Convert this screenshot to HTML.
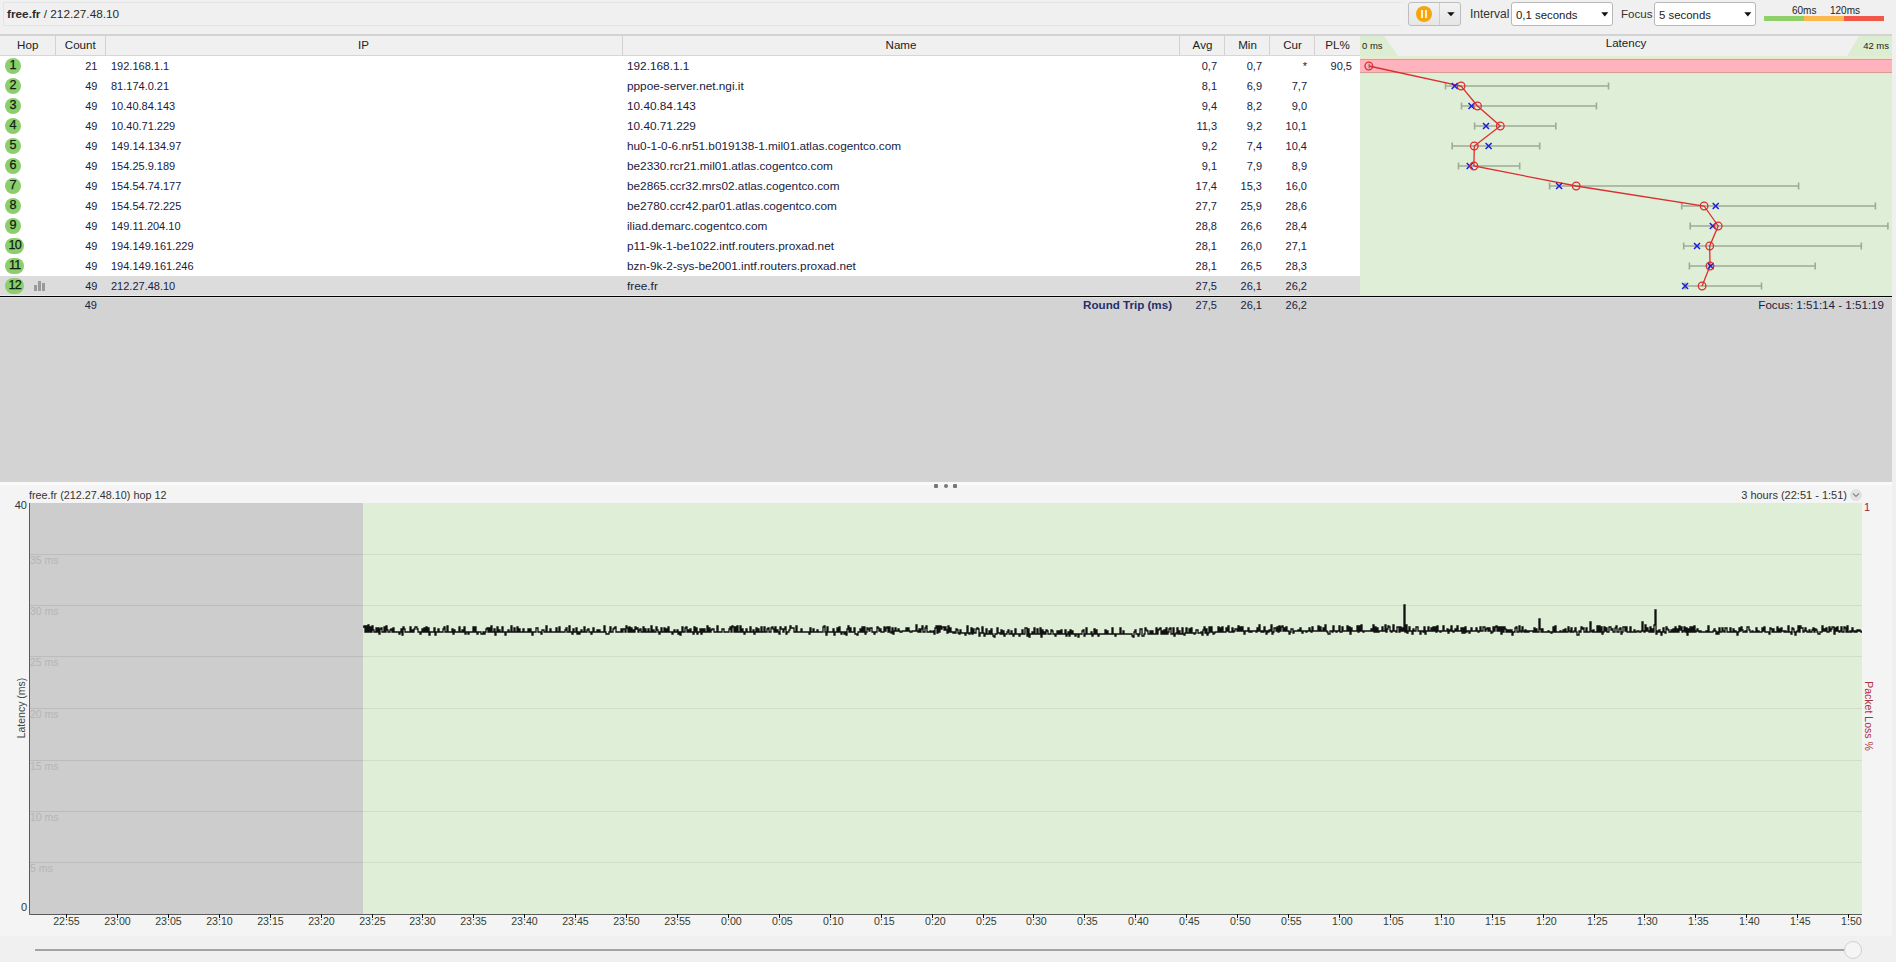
<!DOCTYPE html><html><head><meta charset="utf-8"><style>
*{margin:0;padding:0;box-sizing:border-box}
html,body{width:1896px;height:962px;overflow:hidden;background:#f0f0f0;font-family:"Liberation Sans", sans-serif;position:relative}
.a{position:absolute}
.t{position:absolute;white-space:nowrap;line-height:20px;font-size:11.6px;color:#18223e}
.n{font-size:11px}
.r{text-align:right}
.hd{position:absolute;white-space:nowrap;line-height:20px;font-size:11.6px;color:#222;text-align:center}

</style></head><body>
<div class="a" style="left:3px;top:2px;width:1399px;height:24px;border:1px solid #e4e4e4;border-right-color:#f4f4f4;background:#f0f0f0"></div>
<div class="t" style="left:7px;top:4px;color:#2b2b2b;font-size:11.8px"><b>free.fr</b> / 212.27.48.10</div>
<div class="a" style="left:1408px;top:2px;width:53px;height:24px;border:1px solid #bdbdbd;border-radius:3px;background:linear-gradient(#f2f2f2,#e6e6e6)"></div>
<div class="a" style="left:1439px;top:3px;width:1px;height:22px;background:#cfcfcf"></div>
<div class="a" style="left:1416px;top:6px;width:16px;height:16px;border-radius:50%;background:#f6a60c"></div>
<div class="a" style="left:1421px;top:10px;width:2px;height:8px;background:#fff2c4"></div>
<div class="a" style="left:1425px;top:10px;width:2px;height:8px;background:#fff2c4"></div>
<svg class="a" style="left:1446.5px;top:12px" width="9" height="5"><path d="M0.2 0.2 L7.6 0.2 L3.9 4.2Z" fill="#111"/></svg>
<div class="t" style="left:1470px;top:4px;color:#333;font-size:12px">Interval</div>
<div class="a" style="left:1511px;top:2px;width:102px;height:24px;border:1px solid #b8b8b8;border-radius:3px;background:#fff"></div>
<div class="t" style="left:1516px;top:5px;color:#222;font-size:11.4px">0,1 seconds</div>
<svg class="a" style="left:1601px;top:12px" width="8" height="5"><path d="M0.3 0.2 L7.3 0.2 L3.8 4.5Z" fill="#111"/></svg>
<div class="t" style="left:1621px;top:4px;color:#333;font-size:11.6px">Focus</div>
<div class="a" style="left:1654px;top:2px;width:102px;height:24px;border:1px solid #b8b8b8;border-radius:3px;background:#fff"></div>
<div class="t" style="left:1659px;top:5px;color:#222;font-size:11.4px">5 seconds</div>
<svg class="a" style="left:1744px;top:12px" width="8" height="5"><path d="M0.3 0.2 L7.3 0.2 L3.8 4.5Z" fill="#111"/></svg>
<div class="a" style="left:1764px;top:16px;width:40px;height:5px;background:#8fcf6a"></div>
<div class="a" style="left:1804px;top:16px;width:40px;height:5px;background:#fbb84e"></div>
<div class="a" style="left:1844px;top:16px;width:40px;height:5px;background:#f2584a"></div>
<div class="t" style="left:1792px;top:1px;color:#222;font-size:10px">60ms</div>
<div class="t" style="left:1830px;top:1px;color:#222;font-size:10px">120ms</div>
<div class="a" style="left:0;top:34px;width:1892px;height:22px;background:#f0f0f0;border-top:2px solid #d3d3d3;border-bottom:1px solid #d6d6d6"></div>
<div class="hd" style="left:0px;top:35px;width:55.5px">Hop</div>
<div class="hd" style="left:55.5px;top:35px;width:49.5px">Count</div>
<div class="a" style="left:55px;top:36px;width:1px;height:19px;background:#d2d2d2"></div>
<div class="hd" style="left:105px;top:35px;width:517px">IP</div>
<div class="a" style="left:105px;top:36px;width:1px;height:19px;background:#d2d2d2"></div>
<div class="hd" style="left:622px;top:35px;width:558px">Name</div>
<div class="a" style="left:622px;top:36px;width:1px;height:19px;background:#d2d2d2"></div>
<div class="hd" style="left:1180px;top:35px;width:45px">Avg</div>
<div class="a" style="left:1179px;top:36px;width:1px;height:19px;background:#d2d2d2"></div>
<div class="hd" style="left:1225px;top:35px;width:45px">Min</div>
<div class="a" style="left:1224px;top:36px;width:1px;height:19px;background:#d2d2d2"></div>
<div class="hd" style="left:1270px;top:35px;width:45px">Cur</div>
<div class="a" style="left:1269px;top:36px;width:1px;height:19px;background:#d2d2d2"></div>
<div class="hd" style="left:1315px;top:35px;width:45px">PL%</div>
<div class="a" style="left:1314px;top:36px;width:1px;height:19px;background:#d2d2d2"></div>
<svg class="a" style="left:1360px;top:36px" width="532" height="20"><rect width="532" height="20" fill="#f0f0f0"/><path d="M0 0 L24 0 L38 20 L0 20Z" fill="#dcedd2"/><path d="M532 0 L499 0 L487 20 L532 20Z" fill="#dcedd2"/></svg>
<div class="t" style="left:1362px;top:36px;color:#222;font-size:9.5px">0 ms</div>
<div class="t r" style="left:1800px;width:89px;top:36px;color:#222;font-size:9.5px">42 ms</div>
<div class="hd" style="left:1360px;top:33px;width:532px">Latency</div>
<div class="a" style="left:0;top:56px;width:1360px;height:240px;background:#fff"></div>
<div class="a" style="left:0;top:276px;width:1360px;height:20px;background:#dcdcdc"></div>
<div class="a" style="left:5.199999999999999px;top:58px;width:15.5px;height:16px;border-radius:8px;background:#8bcf6c"></div>
<div class="t" style="left:5.199999999999999px;width:15.5px;top:54.5px;text-align:center;color:#102010;font-size:12.6px;letter-spacing:0;-webkit-text-stroke:0.25px #102010">1</div>
<div class="t r n" style="left:55.5px;width:42px;top:56px">21</div>
<div class="t n" style="left:111px;top:56px">192.168.1.1</div>
<div class="t" style="left:627px;top:56px;font-size:11.8px">192.168.1.1</div>
<div class="t r n" style="left:1165px;width:52px;top:56px">0,7</div>
<div class="t r n" style="left:1210px;width:52px;top:56px">0,7</div>
<div class="t r n" style="left:1255px;width:52px;top:56px">*</div>
<div class="t r n" style="left:1300px;width:52px;top:56px">90,5</div>
<div class="a" style="left:5.199999999999999px;top:78px;width:15.5px;height:16px;border-radius:8px;background:#8bcf6c"></div>
<div class="t" style="left:5.199999999999999px;width:15.5px;top:74.5px;text-align:center;color:#102010;font-size:12.6px;letter-spacing:0;-webkit-text-stroke:0.25px #102010">2</div>
<div class="t r n" style="left:55.5px;width:42px;top:76px">49</div>
<div class="t n" style="left:111px;top:76px">81.174.0.21</div>
<div class="t" style="left:627px;top:76px;font-size:11.8px">pppoe-server.net.ngi.it</div>
<div class="t r n" style="left:1165px;width:52px;top:76px">8,1</div>
<div class="t r n" style="left:1210px;width:52px;top:76px">6,9</div>
<div class="t r n" style="left:1255px;width:52px;top:76px">7,7</div>
<div class="t r n" style="left:1300px;width:52px;top:76px"></div>
<div class="a" style="left:5.199999999999999px;top:98px;width:15.5px;height:16px;border-radius:8px;background:#8bcf6c"></div>
<div class="t" style="left:5.199999999999999px;width:15.5px;top:94.5px;text-align:center;color:#102010;font-size:12.6px;letter-spacing:0;-webkit-text-stroke:0.25px #102010">3</div>
<div class="t r n" style="left:55.5px;width:42px;top:96px">49</div>
<div class="t n" style="left:111px;top:96px">10.40.84.143</div>
<div class="t" style="left:627px;top:96px;font-size:11.8px">10.40.84.143</div>
<div class="t r n" style="left:1165px;width:52px;top:96px">9,4</div>
<div class="t r n" style="left:1210px;width:52px;top:96px">8,2</div>
<div class="t r n" style="left:1255px;width:52px;top:96px">9,0</div>
<div class="t r n" style="left:1300px;width:52px;top:96px"></div>
<div class="a" style="left:5.199999999999999px;top:118px;width:15.5px;height:16px;border-radius:8px;background:#8bcf6c"></div>
<div class="t" style="left:5.199999999999999px;width:15.5px;top:114.5px;text-align:center;color:#102010;font-size:12.6px;letter-spacing:0;-webkit-text-stroke:0.25px #102010">4</div>
<div class="t r n" style="left:55.5px;width:42px;top:116px">49</div>
<div class="t n" style="left:111px;top:116px">10.40.71.229</div>
<div class="t" style="left:627px;top:116px;font-size:11.8px">10.40.71.229</div>
<div class="t r n" style="left:1165px;width:52px;top:116px">11,3</div>
<div class="t r n" style="left:1210px;width:52px;top:116px">9,2</div>
<div class="t r n" style="left:1255px;width:52px;top:116px">10,1</div>
<div class="t r n" style="left:1300px;width:52px;top:116px"></div>
<div class="a" style="left:5.199999999999999px;top:138px;width:15.5px;height:16px;border-radius:8px;background:#8bcf6c"></div>
<div class="t" style="left:5.199999999999999px;width:15.5px;top:134.5px;text-align:center;color:#102010;font-size:12.6px;letter-spacing:0;-webkit-text-stroke:0.25px #102010">5</div>
<div class="t r n" style="left:55.5px;width:42px;top:136px">49</div>
<div class="t n" style="left:111px;top:136px">149.14.134.97</div>
<div class="t" style="left:627px;top:136px;font-size:11.8px">hu0-1-0-6.nr51.b019138-1.mil01.atlas.cogentco.com</div>
<div class="t r n" style="left:1165px;width:52px;top:136px">9,2</div>
<div class="t r n" style="left:1210px;width:52px;top:136px">7,4</div>
<div class="t r n" style="left:1255px;width:52px;top:136px">10,4</div>
<div class="t r n" style="left:1300px;width:52px;top:136px"></div>
<div class="a" style="left:5.199999999999999px;top:158px;width:15.5px;height:16px;border-radius:8px;background:#8bcf6c"></div>
<div class="t" style="left:5.199999999999999px;width:15.5px;top:154.5px;text-align:center;color:#102010;font-size:12.6px;letter-spacing:0;-webkit-text-stroke:0.25px #102010">6</div>
<div class="t r n" style="left:55.5px;width:42px;top:156px">49</div>
<div class="t n" style="left:111px;top:156px">154.25.9.189</div>
<div class="t" style="left:627px;top:156px;font-size:11.8px">be2330.rcr21.mil01.atlas.cogentco.com</div>
<div class="t r n" style="left:1165px;width:52px;top:156px">9,1</div>
<div class="t r n" style="left:1210px;width:52px;top:156px">7,9</div>
<div class="t r n" style="left:1255px;width:52px;top:156px">8,9</div>
<div class="t r n" style="left:1300px;width:52px;top:156px"></div>
<div class="a" style="left:5.199999999999999px;top:178px;width:15.5px;height:16px;border-radius:8px;background:#8bcf6c"></div>
<div class="t" style="left:5.199999999999999px;width:15.5px;top:174.5px;text-align:center;color:#102010;font-size:12.6px;letter-spacing:0;-webkit-text-stroke:0.25px #102010">7</div>
<div class="t r n" style="left:55.5px;width:42px;top:176px">49</div>
<div class="t n" style="left:111px;top:176px">154.54.74.177</div>
<div class="t" style="left:627px;top:176px;font-size:11.8px">be2865.ccr32.mrs02.atlas.cogentco.com</div>
<div class="t r n" style="left:1165px;width:52px;top:176px">17,4</div>
<div class="t r n" style="left:1210px;width:52px;top:176px">15,3</div>
<div class="t r n" style="left:1255px;width:52px;top:176px">16,0</div>
<div class="t r n" style="left:1300px;width:52px;top:176px"></div>
<div class="a" style="left:5.199999999999999px;top:198px;width:15.5px;height:16px;border-radius:8px;background:#8bcf6c"></div>
<div class="t" style="left:5.199999999999999px;width:15.5px;top:194.5px;text-align:center;color:#102010;font-size:12.6px;letter-spacing:0;-webkit-text-stroke:0.25px #102010">8</div>
<div class="t r n" style="left:55.5px;width:42px;top:196px">49</div>
<div class="t n" style="left:111px;top:196px">154.54.72.225</div>
<div class="t" style="left:627px;top:196px;font-size:11.8px">be2780.ccr42.par01.atlas.cogentco.com</div>
<div class="t r n" style="left:1165px;width:52px;top:196px">27,7</div>
<div class="t r n" style="left:1210px;width:52px;top:196px">25,9</div>
<div class="t r n" style="left:1255px;width:52px;top:196px">28,6</div>
<div class="t r n" style="left:1300px;width:52px;top:196px"></div>
<div class="a" style="left:5.199999999999999px;top:218px;width:15.5px;height:16px;border-radius:8px;background:#8bcf6c"></div>
<div class="t" style="left:5.199999999999999px;width:15.5px;top:214.5px;text-align:center;color:#102010;font-size:12.6px;letter-spacing:0;-webkit-text-stroke:0.25px #102010">9</div>
<div class="t r n" style="left:55.5px;width:42px;top:216px">49</div>
<div class="t n" style="left:111px;top:216px">149.11.204.10</div>
<div class="t" style="left:627px;top:216px;font-size:11.8px">iliad.demarc.cogentco.com</div>
<div class="t r n" style="left:1165px;width:52px;top:216px">28,8</div>
<div class="t r n" style="left:1210px;width:52px;top:216px">26,6</div>
<div class="t r n" style="left:1255px;width:52px;top:216px">28,4</div>
<div class="t r n" style="left:1300px;width:52px;top:216px"></div>
<div class="a" style="left:5.15px;top:238px;width:18.8px;height:16px;border-radius:8px;background:#8bcf6c"></div>
<div class="t" style="left:5.45px;width:18.8px;top:234.5px;text-align:center;color:#102010;font-size:12.6px;letter-spacing:-0.6px;-webkit-text-stroke:0.25px #102010">10</div>
<div class="t r n" style="left:55.5px;width:42px;top:236px">49</div>
<div class="t n" style="left:111px;top:236px">194.149.161.229</div>
<div class="t" style="left:627px;top:236px;font-size:11.8px">p11-9k-1-be1022.intf.routers.proxad.net</div>
<div class="t r n" style="left:1165px;width:52px;top:236px">28,1</div>
<div class="t r n" style="left:1210px;width:52px;top:236px">26,0</div>
<div class="t r n" style="left:1255px;width:52px;top:236px">27,1</div>
<div class="t r n" style="left:1300px;width:52px;top:236px"></div>
<div class="a" style="left:5.15px;top:258px;width:18.8px;height:16px;border-radius:8px;background:#8bcf6c"></div>
<div class="t" style="left:5.45px;width:18.8px;top:254.5px;text-align:center;color:#102010;font-size:12.6px;letter-spacing:-0.6px;-webkit-text-stroke:0.25px #102010">11</div>
<div class="t r n" style="left:55.5px;width:42px;top:256px">49</div>
<div class="t n" style="left:111px;top:256px">194.149.161.246</div>
<div class="t" style="left:627px;top:256px;font-size:11.8px">bzn-9k-2-sys-be2001.intf.routers.proxad.net</div>
<div class="t r n" style="left:1165px;width:52px;top:256px">28,1</div>
<div class="t r n" style="left:1210px;width:52px;top:256px">26,5</div>
<div class="t r n" style="left:1255px;width:52px;top:256px">28,3</div>
<div class="t r n" style="left:1300px;width:52px;top:256px"></div>
<div class="a" style="left:5.15px;top:278px;width:18.8px;height:16px;border-radius:8px;background:#8bcf6c"></div>
<div class="t" style="left:5.45px;width:18.8px;top:274.5px;text-align:center;color:#102010;font-size:12.6px;letter-spacing:-0.6px;-webkit-text-stroke:0.25px #102010">12</div>
<div class="t r n" style="left:55.5px;width:42px;top:276px">49</div>
<div class="t n" style="left:111px;top:276px">212.27.48.10</div>
<div class="t" style="left:627px;top:276px;font-size:11.8px">free.fr</div>
<div class="t r n" style="left:1165px;width:52px;top:276px">27,5</div>
<div class="t r n" style="left:1210px;width:52px;top:276px">26,1</div>
<div class="t r n" style="left:1255px;width:52px;top:276px">26,2</div>
<div class="t r n" style="left:1300px;width:52px;top:276px"></div>
<div class="a" style="left:34px;top:285px;width:3px;height:6px;background:#9a9a9a"></div>
<div class="a" style="left:38px;top:281px;width:3px;height:10px;background:#9a9a9a"></div>
<div class="a" style="left:42px;top:283px;width:3px;height:8px;background:#9a9a9a"></div>
<svg class="a" style="left:1360px;top:56px" width="532" height="240"><rect width="532" height="240" fill="#dfeed6"/><rect x="0" y="3" width="532" height="14" fill="#ffb3bf"/><rect x="0" y="2" width="532" height="1" fill="#f3e3c8"/><rect x="0" y="3" width="532" height="1" fill="#d49f90"/><rect x="0" y="16" width="532" height="1" fill="#d49f90"/><rect x="0" y="17" width="532" height="1" fill="#f3e3c8"/><path d="M85.5 30 H248.5 M85.5 26.5 V33.5 M248.5 26.5 V33.5" stroke="#9eab98" stroke-width="1.6" fill="none"/><path d="M101.5 50 H236.4 M101.5 46.5 V53.5 M236.4 46.5 V53.5" stroke="#9eab98" stroke-width="1.6" fill="none"/><path d="M114.6 70 H195.8 M114.6 66.5 V73.5 M195.8 66.5 V73.5" stroke="#9eab98" stroke-width="1.6" fill="none"/><path d="M92.2 90 H179.7 M92.2 86.5 V93.5 M179.7 86.5 V93.5" stroke="#9eab98" stroke-width="1.6" fill="none"/><path d="M98.5 110 H159.7 M98.5 106.5 V113.5 M159.7 106.5 V113.5" stroke="#9eab98" stroke-width="1.6" fill="none"/><path d="M189.6 130 H438.6 M189.6 126.5 V133.5 M438.6 126.5 V133.5" stroke="#9eab98" stroke-width="1.6" fill="none"/><path d="M321.7 150 H515.4 M321.7 146.5 V153.5 M515.4 146.5 V153.5" stroke="#9eab98" stroke-width="1.6" fill="none"/><path d="M330.2 170 H527.9 M330.2 166.5 V173.5 M527.9 166.5 V173.5" stroke="#9eab98" stroke-width="1.6" fill="none"/><path d="M323.7 190 H501.3 M323.7 186.5 V193.5 M501.3 186.5 V193.5" stroke="#9eab98" stroke-width="1.6" fill="none"/><path d="M329.4 210 H455.2 M329.4 206.5 V213.5 M455.2 206.5 V213.5" stroke="#9eab98" stroke-width="1.6" fill="none"/><path d="M325.1 230 H401.5 M325.1 226.5 V233.5 M401.5 226.5 V233.5" stroke="#9eab98" stroke-width="1.6" fill="none"/><polyline points="8.8,10 101.1,30 117.5,50 140.3,70 114.3,90 113.9,110 216.2,130 344.1,150 358.2,170 349.7,190 350.0,210 342.1,230" stroke="#dc2e30" stroke-width="1.3" fill="none"/><circle cx="8.8" cy="10" r="3.8" stroke="#dc2e30" stroke-width="1.3" fill="none"/><path d="M91.7 27 L97.7 33 M91.7 33 L97.7 27" stroke="#1c1ce0" stroke-width="1.5"/><circle cx="101.1" cy="30" r="3.8" stroke="#dc2e30" stroke-width="1.3" fill="none"/><path d="M108.5 47 L114.5 53 M108.5 53 L114.5 47" stroke="#1c1ce0" stroke-width="1.5"/><circle cx="117.5" cy="50" r="3.8" stroke="#dc2e30" stroke-width="1.3" fill="none"/><path d="M123.0 67 L129.0 73 M123.0 73 L129.0 67" stroke="#1c1ce0" stroke-width="1.5"/><circle cx="140.3" cy="70" r="3.8" stroke="#dc2e30" stroke-width="1.3" fill="none"/><path d="M125.6 87 L131.6 93 M125.6 93 L131.6 87" stroke="#1c1ce0" stroke-width="1.5"/><circle cx="114.3" cy="90" r="3.8" stroke="#dc2e30" stroke-width="1.3" fill="none"/><path d="M106.7 107 L112.7 113 M106.7 113 L112.7 107" stroke="#1c1ce0" stroke-width="1.5"/><circle cx="113.9" cy="110" r="3.8" stroke="#dc2e30" stroke-width="1.3" fill="none"/><path d="M196.1 127 L202.1 133 M196.1 133 L202.1 127" stroke="#1c1ce0" stroke-width="1.5"/><circle cx="216.2" cy="130" r="3.8" stroke="#dc2e30" stroke-width="1.3" fill="none"/><path d="M352.7 147 L358.7 153 M352.7 153 L358.7 147" stroke="#1c1ce0" stroke-width="1.5"/><circle cx="344.1" cy="150" r="3.8" stroke="#dc2e30" stroke-width="1.3" fill="none"/><path d="M349.8 167 L355.8 173 M349.8 173 L355.8 167" stroke="#1c1ce0" stroke-width="1.5"/><circle cx="358.2" cy="170" r="3.8" stroke="#dc2e30" stroke-width="1.3" fill="none"/><path d="M334.0 187 L340.0 193 M334.0 193 L340.0 187" stroke="#1c1ce0" stroke-width="1.5"/><circle cx="349.7" cy="190" r="3.8" stroke="#dc2e30" stroke-width="1.3" fill="none"/><path d="M347.6 207 L353.6 213 M347.6 213 L353.6 207" stroke="#1c1ce0" stroke-width="1.5"/><circle cx="350.0" cy="210" r="3.8" stroke="#dc2e30" stroke-width="1.3" fill="none"/><path d="M322.1 227 L328.1 233 M322.1 233 L328.1 227" stroke="#1c1ce0" stroke-width="1.5"/><circle cx="342.1" cy="230" r="3.8" stroke="#dc2e30" stroke-width="1.3" fill="none"/><path d="M9.2 7.8 V12.2" stroke="#8a6a6a" stroke-width="1.2"/></svg>
<div class="a" style="left:0;top:296px;width:1892px;height:186px;background:#d3d3d3"></div>
<div class="a" style="left:0;top:295px;width:1360px;height:1px;background:#ebebeb"></div>
<div class="a" style="left:0;top:296px;width:1892px;height:1px;background:#000"></div>
<div class="a" style="left:0;top:297px;width:1892px;height:1px;background:#e3e3e3"></div>
<div class="t r n" style="left:55px;width:42px;top:295px">49</div>
<div class="t r" style="left:900px;width:272px;top:295px;font-weight:bold;color:#1f2f6a">Round Trip (ms)</div>
<div class="t r n" style="left:1165px;width:52px;top:295px">27,5</div>
<div class="t r n" style="left:1210px;width:52px;top:295px">26,1</div>
<div class="t r n" style="left:1255px;width:52px;top:295px">26,2</div>
<div class="t r" style="left:1600px;width:284px;top:295px">Focus: 1:51:14 - 1:51:19</div>
<div class="a" style="left:0;top:482px;width:1892px;height:454px;background:#f4f4f4"></div>
<div class="a" style="left:0;top:482px;width:1892px;height:3px;background:#fafafa"></div>
<div class="a" style="left:934px;top:484px;width:4px;height:4px;background:#777;border-radius:1px"></div>
<div class="a" style="left:943.5px;top:484px;width:4px;height:4px;background:#777;border-radius:50%"></div>
<div class="a" style="left:953px;top:484px;width:4px;height:4px;background:#777;border-radius:1px"></div>
<div class="t" style="left:29px;top:485px;color:#333;font-size:10.8px">free.fr (212.27.48.10) hop 12</div>
<div class="t r" style="left:1600px;width:247px;top:485px;color:#333;font-size:11px">3 hours (22:51 - 1:51)</div>
<div class="a" style="left:1850px;top:489px;width:12px;height:12px;border-radius:50%;background:#e2e2e2"></div>
<svg class="a" style="left:1852px;top:492px" width="8" height="6"><path d="M1 1.5 L4 4.5 L7 1.5" stroke="#888" stroke-width="1.2" fill="none"/></svg>
<svg class="a" style="left:0;top:482px" width="1896" height="454"><rect x="30" y="21" width="333" height="411" fill="#cdcdcd"/><rect x="363" y="21" width="1499" height="411" fill="#dfeed6"/><path d="M30 72.5 H363" stroke="#bcbcbc" stroke-width="1"/><path d="M363 72.5 H1862" stroke="#d0ddc8" stroke-width="1"/><path d="M30 123.5 H363" stroke="#bcbcbc" stroke-width="1"/><path d="M363 123.5 H1862" stroke="#d0ddc8" stroke-width="1"/><path d="M30 174.5 H363" stroke="#bcbcbc" stroke-width="1"/><path d="M363 174.5 H1862" stroke="#d0ddc8" stroke-width="1"/><path d="M30 226.5 H363" stroke="#bcbcbc" stroke-width="1"/><path d="M363 226.5 H1862" stroke="#d0ddc8" stroke-width="1"/><path d="M30 278.5 H363" stroke="#bcbcbc" stroke-width="1"/><path d="M363 278.5 H1862" stroke="#d0ddc8" stroke-width="1"/><path d="M30 329.5 H363" stroke="#bcbcbc" stroke-width="1"/><path d="M363 329.5 H1862" stroke="#d0ddc8" stroke-width="1"/><path d="M30 380.5 H363" stroke="#bcbcbc" stroke-width="1"/><path d="M363 380.5 H1862" stroke="#d0ddc8" stroke-width="1"/><path d="M363 145.0 H364 V144.0 H365 V150.0 H366 V144.0 H367 V150.0 H368 V143.0 H369 V150.0 H370 V145.0 H371 V150.0 H372 V144.0 H373 V148.0 H374 V150.0 H375 V150.0 H376 V146.0 H377 V150.0 H378 V146.0 H379 V152.0 H380 V147.0 H381 V146.0 H382 V150.0 H383 V150.0 H384 V145.0 H385 V150.0 H386 V144.0 H387 V148.0 H388 V150.0 H389 V150.0 H390 V148.0 H391 V147.0 H392 V150.0 H393 V146.0 H394 V150.0 H395 V150.0 H396 V150.0 H397 V150.0 H398 V150.0 H399 V152.0 H400 V150.0 H401 V147.0 H402 V153.0 H403 V145.0 H404 V147.0 H405 V150.0 H406 V150.0 H407 V150.0 H408 V150.0 H409 V150.0 H410 V145.0 H411 V150.0 H412 V148.0 H413 V150.0 H414 V147.0 H415 V145.0 H416 V145.0 H417 V147.0 H418 V150.0 H419 V150.0 H420 V152.0 H421 V150.0 H422 V147.0 H423 V150.0 H424 V146.0 H425 V150.0 H426 V145.0 H427 V150.0 H428 V146.0 H429 V153.0 H430 V150.0 H431 V150.0 H432 V150.0 H433 V150.0 H434 V146.0 H435 V153.0 H436 V150.0 H437 V150.0 H438 V147.0 H439 V150.0 H440 V150.0 H441 V150.0 H442 V150.0 H443 V147.0 H444 V145.0 H445 V150.0 H446 V150.0 H447 V144.0 H448 V150.0 H449 V150.0 H450 V150.0 H451 V150.0 H452 V147.0 H453 V152.0 H454 V148.0 H455 V150.0 H456 V150.0 H457 V150.0 H458 V150.0 H459 V145.0 H460 V150.0 H461 V150.0 H462 V148.0 H463 V150.0 H464 V145.0 H465 V152.0 H466 V150.0 H467 V150.0 H468 V152.0 H469 V150.0 H470 V150.0 H471 V150.0 H472 V150.0 H473 V145.0 H474 V150.0 H475 V145.0 H476 V150.0 H477 V152.0 H478 V150.0 H479 V150.0 H480 V150.0 H481 V152.0 H482 V152.0 H483 V150.0 H484 V152.0 H485 V150.0 H486 V147.0 H487 V146.0 H488 V150.0 H489 V146.0 H490 V150.0 H491 V144.0 H492 V150.0 H493 V150.0 H494 V147.0 H495 V153.0 H496 V150.0 H497 V145.0 H498 V150.0 H499 V148.0 H500 V150.0 H501 V150.0 H502 V145.0 H503 V150.0 H504 V150.0 H505 V153.0 H506 V150.0 H507 V150.0 H508 V148.0 H509 V150.0 H510 V150.0 H511 V144.0 H512 V150.0 H513 V150.0 H514 V146.0 H515 V150.0 H516 V150.0 H517 V145.0 H518 V150.0 H519 V147.0 H520 V150.0 H521 V150.0 H522 V150.0 H523 V147.0 H524 V150.0 H525 V150.0 H526 V150.0 H527 V150.0 H528 V147.0 H529 V150.0 H530 V147.0 H531 V150.0 H532 V153.0 H533 V150.0 H534 V150.0 H535 V150.0 H536 V146.0 H537 V146.0 H538 V150.0 H539 V150.0 H540 V150.0 H541 V152.0 H542 V148.0 H543 V148.0 H544 V150.0 H545 V150.0 H546 V144.0 H547 V150.0 H548 V150.0 H549 V150.0 H550 V147.0 H551 V150.0 H552 V150.0 H553 V150.0 H554 V150.0 H555 V150.0 H556 V146.0 H557 V150.0 H558 V150.0 H559 V145.0 H560 V150.0 H561 V150.0 H562 V150.0 H563 V150.0 H564 V150.0 H565 V148.0 H566 V146.0 H567 V150.0 H568 V150.0 H569 V144.0 H570 V150.0 H571 V150.0 H572 V152.0 H573 V147.0 H574 V150.0 H575 V150.0 H576 V146.0 H577 V152.0 H578 V150.0 H579 V152.0 H580 V150.0 H581 V148.0 H582 V150.0 H583 V150.0 H584 V145.0 H585 V150.0 H586 V150.0 H587 V148.0 H588 V147.0 H589 V150.0 H590 V150.0 H591 V152.0 H592 V150.0 H593 V146.0 H594 V150.0 H595 V150.0 H596 V150.0 H597 V148.0 H598 V150.0 H599 V148.0 H600 V150.0 H601 V150.0 H602 V150.0 H603 V150.0 H604 V144.0 H605 V150.0 H606 V152.0 H607 V152.0 H608 V152.0 H609 V150.0 H610 V145.0 H611 V150.0 H612 V150.0 H613 V147.0 H614 V146.0 H615 V145.0 H616 V150.0 H617 V150.0 H618 V150.0 H619 V150.0 H620 V150.0 H621 V147.0 H622 V150.0 H623 V147.0 H624 V147.0 H625 V150.0 H626 V144.0 H627 V146.0 H628 V150.0 H629 V145.0 H630 V150.0 H631 V146.0 H632 V150.0 H633 V148.0 H634 V150.0 H635 V145.0 H636 V147.0 H637 V146.0 H638 V150.0 H639 V148.0 H640 V147.0 H641 V150.0 H642 V150.0 H643 V145.0 H644 V150.0 H645 V147.0 H646 V150.0 H647 V150.0 H648 V147.0 H649 V150.0 H650 V150.0 H651 V144.0 H652 V150.0 H653 V148.0 H654 V150.0 H655 V150.0 H656 V145.0 H657 V148.0 H658 V150.0 H659 V152.0 H660 V150.0 H661 V146.0 H662 V150.0 H663 V150.0 H664 V146.0 H665 V150.0 H666 V147.0 H667 V150.0 H668 V145.0 H669 V150.0 H670 V150.0 H671 V150.0 H672 V152.0 H673 V150.0 H674 V148.0 H675 V150.0 H676 V150.0 H677 V148.0 H678 V152.0 H679 V150.0 H680 V153.0 H681 V150.0 H682 V145.0 H683 V150.0 H684 V150.0 H685 V146.0 H686 V145.0 H687 V150.0 H688 V148.0 H689 V150.0 H690 V147.0 H691 V150.0 H692 V150.0 H693 V152.0 H694 V145.0 H695 V150.0 H696 V146.0 H697 V152.0 H698 V150.0 H699 V150.0 H700 V147.0 H701 V152.0 H702 V147.0 H703 V150.0 H704 V147.0 H705 V150.0 H706 V150.0 H707 V144.0 H708 V150.0 H709 V146.0 H710 V150.0 H711 V148.0 H712 V147.0 H713 V147.0 H714 V150.0 H715 V150.0 H716 V150.0 H717 V144.0 H718 V150.0 H719 V150.0 H720 V150.0 H721 V150.0 H722 V147.0 H723 V147.0 H724 V150.0 H725 V150.0 H726 V150.0 H727 V150.0 H728 V150.0 H729 V147.0 H730 V145.0 H731 V150.0 H732 V144.0 H733 V145.0 H734 V150.0 H735 V145.0 H736 V150.0 H737 V144.0 H738 V150.0 H739 V150.0 H740 V144.0 H741 V150.0 H742 V147.0 H743 V150.0 H744 V152.0 H745 V150.0 H746 V147.0 H747 V150.0 H748 V150.0 H749 V150.0 H750 V145.0 H751 V150.0 H752 V150.0 H753 V148.0 H754 V152.0 H755 V150.0 H756 V146.0 H757 V150.0 H758 V147.0 H759 V150.0 H760 V150.0 H761 V145.0 H762 V150.0 H763 V150.0 H764 V145.0 H765 V150.0 H766 V150.0 H767 V147.0 H768 V146.0 H769 V150.0 H770 V150.0 H771 V146.0 H772 V145.0 H773 V147.0 H774 V150.0 H775 V145.0 H776 V150.0 H777 V148.0 H778 V150.0 H779 V152.0 H780 V145.0 H781 V147.0 H782 V147.0 H783 V150.0 H784 V147.0 H785 V145.0 H786 V152.0 H787 V150.0 H788 V150.0 H789 V148.0 H790 V144.0 H791 V146.0 H792 V146.0 H793 V146.0 H794 V150.0 H795 V150.0 H796 V144.0 H797 V150.0 H798 V150.0 H799 V150.0 H800 V150.0 H801 V147.0 H802 V150.0 H803 V150.0 H804 V150.0 H805 V150.0 H806 V150.0 H807 V150.0 H808 V150.0 H809 V152.0 H810 V146.0 H811 V150.0 H812 V150.0 H813 V147.0 H814 V150.0 H815 V150.0 H816 V150.0 H817 V148.0 H818 V150.0 H819 V150.0 H820 V150.0 H821 V150.0 H822 V150.0 H823 V145.0 H824 V144.0 H825 V150.0 H826 V153.0 H827 V145.0 H828 V150.0 H829 V150.0 H830 V150.0 H831 V150.0 H832 V150.0 H833 V147.0 H834 V153.0 H835 V150.0 H836 V150.0 H837 V146.0 H838 V150.0 H839 V145.0 H840 V150.0 H841 V152.0 H842 V150.0 H843 V150.0 H844 V152.0 H845 V150.0 H846 V153.0 H847 V147.0 H848 V144.0 H849 V150.0 H850 V146.0 H851 V150.0 H852 V150.0 H853 V150.0 H854 V146.0 H855 V152.0 H856 V152.0 H857 V153.0 H858 V150.0 H859 V150.0 H860 V147.0 H861 V150.0 H862 V145.0 H863 V150.0 H864 V145.0 H865 V152.0 H866 V150.0 H867 V146.0 H868 V147.0 H869 V149.0 H870 V146.0 H871 V146.0 H872 V150.0 H873 V150.0 H874 V152.0 H875 V150.0 H876 V150.0 H877 V145.0 H878 V146.0 H879 V149.0 H880 V147.0 H881 V150.0 H882 V150.0 H883 V150.0 H884 V145.0 H885 V149.0 H886 V146.0 H887 V145.0 H888 V150.0 H889 V145.0 H890 V150.0 H891 V151.0 H892 V146.0 H893 V152.0 H894 V149.0 H895 V146.0 H896 V149.0 H897 V149.0 H898 V147.0 H899 V149.0 H900 V150.0 H901 V150.0 H902 V149.0 H903 V149.0 H904 V149.0 H905 V149.0 H906 V146.0 H907 V149.0 H908 V146.0 H909 V149.0 H910 V150.0 H911 V150.0 H912 V149.0 H913 V149.0 H914 V149.0 H915 V149.0 H916 V143.0 H917 V149.0 H918 V150.0 H919 V147.0 H920 V150.0 H921 V147.0 H922 V144.0 H923 V150.0 H924 V150.0 H925 V146.0 H926 V144.0 H927 V150.0 H928 V150.0 H929 V150.0 H930 V149.0 H931 V150.0 H932 V150.0 H933 V149.0 H934 V152.0 H935 V146.0 H936 V144.0 H937 V151.0 H938 V144.0 H939 V150.0 H940 V144.0 H941 V147.0 H942 V145.0 H943 V145.0 H944 V148.0 H945 V145.0 H946 V148.0 H947 V151.0 H948 V144.0 H949 V150.0 H950 V146.0 H951 V150.0 H952 V150.0 H953 V151.0 H954 V150.0 H955 V151.0 H956 V147.0 H957 V148.0 H958 V151.0 H959 V152.0 H960 V148.0 H961 V151.0 H962 V151.0 H963 V151.0 H964 V151.0 H965 V153.0 H966 V151.0 H967 V144.0 H968 V151.0 H969 V152.0 H970 V151.0 H971 V146.0 H972 V152.0 H973 V147.0 H974 V151.0 H975 V151.0 H976 V147.0 H977 V146.0 H978 V147.0 H979 V154.0 H980 V151.0 H981 V151.0 H982 V145.0 H983 V151.0 H984 V154.0 H985 V152.0 H986 V147.0 H987 V152.0 H988 V152.0 H989 V149.0 H990 V152.0 H991 V147.0 H992 V152.0 H993 V154.0 H994 V155.0 H995 V152.0 H996 V152.0 H997 V146.0 H998 V151.0 H999 V151.0 H1000 V152.0 H1001 V148.0 H1002 V152.0 H1003 V149.0 H1004 V154.0 H1005 V152.0 H1006 V152.0 H1007 V150.0 H1008 V148.0 H1009 V152.0 H1010 V152.0 H1011 V149.0 H1012 V152.0 H1013 V154.0 H1014 V152.0 H1015 V147.0 H1016 V152.0 H1017 V152.0 H1018 V152.0 H1019 V154.0 H1020 V152.0 H1021 V152.0 H1022 V148.0 H1023 V152.0 H1024 V152.0 H1025 V146.0 H1026 V146.0 H1027 V154.0 H1028 V147.0 H1029 V155.0 H1030 V152.0 H1031 V152.0 H1032 V150.0 H1033 V152.0 H1034 V146.0 H1035 V152.0 H1036 V152.0 H1037 V147.0 H1038 V152.0 H1039 V152.0 H1040 V146.0 H1041 V155.0 H1042 V148.0 H1043 V152.0 H1044 V150.0 H1045 V152.0 H1046 V148.0 H1047 V149.0 H1048 V152.0 H1049 V152.0 H1050 V152.0 H1051 V148.0 H1052 V149.0 H1053 V152.0 H1054 V152.0 H1055 V154.0 H1056 V152.0 H1057 V149.0 H1058 V152.0 H1059 V149.0 H1060 V152.0 H1061 V148.0 H1062 V152.0 H1063 V152.0 H1064 V152.0 H1065 V148.0 H1066 V154.0 H1067 V152.0 H1068 V150.0 H1069 V154.0 H1070 V148.0 H1071 V152.0 H1072 V149.0 H1073 V152.0 H1074 V152.0 H1075 V154.0 H1076 V152.0 H1077 V152.0 H1078 V155.0 H1079 V152.0 H1080 V152.0 H1081 V152.0 H1082 V149.0 H1083 V148.0 H1084 V154.0 H1085 V152.0 H1086 V146.0 H1087 V152.0 H1088 V152.0 H1089 V152.0 H1090 V152.0 H1091 V150.0 H1092 V154.0 H1093 V152.0 H1094 V147.0 H1095 V152.0 H1096 V148.0 H1097 V152.0 H1098 V154.0 H1099 V152.0 H1100 V152.0 H1101 V152.0 H1102 V152.0 H1103 V152.0 H1104 V152.0 H1105 V148.0 H1106 V152.0 H1107 V149.0 H1108 V152.0 H1109 V152.0 H1110 V152.0 H1111 V152.0 H1112 V146.0 H1113 V152.0 H1114 V152.0 H1115 V154.0 H1116 V152.0 H1117 V152.0 H1118 V152.0 H1119 V152.0 H1120 V146.0 H1121 V152.0 H1122 V152.0 H1123 V149.0 H1124 V152.0 H1125 V152.0 H1126 V152.0 H1127 V152.0 H1128 V152.0 H1129 V152.0 H1130 V152.0 H1131 V152.0 H1132 V154.0 H1133 V155.0 H1134 V150.0 H1135 V148.0 H1136 V152.0 H1137 V152.0 H1138 V154.0 H1139 V152.0 H1140 V147.0 H1141 V147.0 H1142 V154.0 H1143 V154.0 H1144 V152.0 H1145 V146.0 H1146 V148.0 H1147 V149.0 H1148 V152.0 H1149 V152.0 H1150 V149.0 H1151 V152.0 H1152 V149.0 H1153 V152.0 H1154 V152.0 H1155 V152.0 H1156 V146.0 H1157 V152.0 H1158 V148.0 H1159 V147.0 H1160 V146.0 H1161 V152.0 H1162 V149.0 H1163 V152.0 H1164 V148.0 H1165 V152.0 H1166 V146.0 H1167 V152.0 H1168 V150.0 H1169 V147.0 H1170 V146.0 H1171 V152.0 H1172 V152.0 H1173 V146.0 H1174 V154.0 H1175 V152.0 H1176 V151.0 H1177 V146.0 H1178 V152.0 H1179 V149.0 H1180 V152.0 H1181 V152.0 H1182 V146.0 H1183 V152.0 H1184 V153.0 H1185 V151.0 H1186 V146.0 H1187 V151.0 H1188 V151.0 H1189 V147.0 H1190 V151.0 H1191 V146.0 H1192 V151.0 H1193 V151.0 H1194 V152.0 H1195 V151.0 H1196 V148.0 H1197 V148.0 H1198 V151.0 H1199 V151.0 H1200 V151.0 H1201 V150.0 H1202 V153.0 H1203 V148.0 H1204 V145.0 H1205 V151.0 H1206 V147.0 H1207 V153.0 H1208 V151.0 H1209 V145.0 H1210 V150.0 H1211 V145.0 H1212 V150.0 H1213 V152.0 H1214 V151.0 H1215 V150.0 H1216 V150.0 H1217 V150.0 H1218 V145.0 H1219 V150.0 H1220 V146.0 H1221 V150.0 H1222 V145.0 H1223 V150.0 H1224 V150.0 H1225 V150.0 H1226 V146.0 H1227 V149.0 H1228 V144.0 H1229 V150.0 H1230 V150.0 H1231 V150.0 H1232 V146.0 H1233 V150.0 H1234 V149.0 H1235 V147.0 H1236 V147.0 H1237 V149.0 H1238 V144.0 H1239 V149.0 H1240 V145.0 H1241 V149.0 H1242 V145.0 H1243 V149.0 H1244 V152.0 H1245 V149.0 H1246 V149.0 H1247 V149.0 H1248 V146.0 H1249 V150.0 H1250 V149.0 H1251 V150.0 H1252 V149.0 H1253 V149.0 H1254 V149.0 H1255 V149.0 H1256 V150.0 H1257 V146.0 H1258 V149.0 H1259 V143.0 H1260 V149.0 H1261 V150.0 H1262 V149.0 H1263 V150.0 H1264 V145.0 H1265 V149.0 H1266 V152.0 H1267 V149.0 H1268 V150.0 H1269 V148.0 H1270 V149.0 H1271 V143.0 H1272 V152.0 H1273 V150.0 H1274 V146.0 H1275 V146.0 H1276 V149.0 H1277 V145.0 H1278 V150.0 H1279 V144.0 H1280 V149.0 H1281 V145.0 H1282 V144.0 H1283 V149.0 H1284 V146.0 H1285 V149.0 H1286 V145.0 H1287 V149.0 H1288 V149.0 H1289 V152.0 H1290 V150.0 H1291 V147.0 H1292 V147.0 H1293 V151.0 H1294 V149.0 H1295 V149.0 H1296 V149.0 H1297 V149.0 H1298 V148.0 H1299 V149.0 H1300 V146.0 H1301 V149.0 H1302 V151.0 H1303 V149.0 H1304 V149.0 H1305 V149.0 H1306 V150.0 H1307 V149.0 H1308 V149.0 H1309 V146.0 H1310 V149.0 H1311 V150.0 H1312 V145.0 H1313 V149.0 H1314 V149.0 H1315 V149.0 H1316 V149.0 H1317 V149.0 H1318 V144.0 H1319 V149.0 H1320 V145.0 H1321 V149.0 H1322 V149.0 H1323 V146.0 H1324 V149.0 H1325 V143.0 H1326 V149.0 H1327 V150.0 H1328 V152.0 H1329 V152.0 H1330 V149.0 H1331 V149.0 H1332 V150.0 H1333 V144.0 H1334 V149.0 H1335 V149.0 H1336 V150.0 H1337 V149.0 H1338 V149.0 H1339 V144.0 H1340 V150.0 H1341 V150.0 H1342 V145.0 H1343 V149.0 H1344 V149.0 H1345 V149.0 H1346 V149.0 H1347 V144.0 H1348 V149.0 H1349 V145.0 H1350 V152.0 H1351 V146.0 H1352 V149.0 H1353 V149.0 H1354 V149.0 H1355 V149.0 H1356 V149.0 H1357 V144.0 H1358 V150.0 H1359 V144.0 H1360 V149.0 H1361 V143.0 H1362 V149.0 H1363 V150.0 H1364 V149.0 H1365 V149.0 H1366 V149.0 H1367 V149.0 H1368 V149.0 H1369 V149.0 H1370 V149.0 H1371 V147.0 H1372 V149.0 H1373 V143.0 H1374 V150.0 H1375 V145.0 H1376 V150.0 H1377 V146.0 H1378 V150.0 H1379 V149.0 H1380 V149.0 H1381 V149.0 H1382 V145.0 H1383 V149.0 H1384 V149.0 H1385 V143.0 H1386 V150.0 H1387 V147.0 H1388 V144.0 H1389 V145.0 H1390 V149.0 H1391 V150.0 H1392 V149.0 H1393 V143.0 H1394 V149.0 H1395 V149.0 H1396 V150.0 H1397 V145.0 H1398 V145.0 H1399 V150.0 H1400 V145.0 H1401 V149.0 H1402 V146.0 H1403 V149.0 H1404 V123.0 H1405 V150.0 H1406 V143.0 H1407 V151.0 H1408 V149.0 H1409 V145.0 H1410 V149.0 H1411 V149.0 H1412 V152.0 H1413 V147.0 H1414 V149.0 H1415 V149.0 H1416 V145.0 H1417 V145.0 H1418 V149.0 H1419 V149.0 H1420 V152.0 H1421 V149.0 H1422 V149.0 H1423 V150.0 H1424 V145.0 H1425 V152.0 H1426 V149.0 H1427 V149.0 H1428 V145.0 H1429 V149.0 H1430 V149.0 H1431 V146.0 H1432 V149.0 H1433 V145.0 H1434 V149.0 H1435 V145.0 H1436 V150.0 H1437 V144.0 H1438 V149.0 H1439 V149.0 H1440 V150.0 H1441 V149.0 H1442 V149.0 H1443 V144.0 H1444 V149.0 H1445 V149.0 H1446 V149.0 H1447 V147.0 H1448 V151.0 H1449 V148.0 H1450 V149.0 H1451 V144.0 H1452 V149.0 H1453 V150.0 H1454 V149.0 H1455 V147.0 H1456 V149.0 H1457 V144.0 H1458 V149.0 H1459 V149.0 H1460 V149.0 H1461 V146.0 H1462 V151.0 H1463 V146.0 H1464 V151.0 H1465 V145.0 H1466 V150.0 H1467 V149.0 H1468 V149.0 H1469 V151.0 H1470 V149.0 H1471 V146.0 H1472 V149.0 H1473 V149.0 H1474 V149.0 H1475 V149.0 H1476 V146.0 H1477 V149.0 H1478 V150.0 H1479 V149.0 H1480 V145.0 H1481 V149.0 H1482 V149.0 H1483 V145.0 H1484 V145.0 H1485 V149.0 H1486 V147.0 H1487 V146.0 H1488 V149.0 H1489 V146.0 H1490 V149.0 H1491 V151.0 H1492 V150.0 H1493 V145.0 H1494 V149.0 H1495 V145.0 H1496 V144.0 H1497 V149.0 H1498 V145.0 H1499 V149.0 H1500 V145.0 H1501 V152.0 H1502 V145.0 H1503 V150.0 H1504 V145.0 H1505 V147.0 H1506 V150.0 H1507 V148.0 H1508 V150.0 H1509 V148.0 H1510 V150.0 H1511 V148.0 H1512 V153.0 H1513 V150.0 H1514 V150.0 H1515 V146.0 H1516 V145.0 H1517 V150.0 H1518 V150.0 H1519 V144.0 H1520 V149.0 H1521 V150.0 H1522 V145.0 H1523 V149.0 H1524 V150.0 H1525 V148.0 H1526 V150.0 H1527 V149.0 H1528 V150.0 H1529 V149.0 H1530 V149.0 H1531 V149.0 H1532 V149.0 H1533 V150.0 H1534 V146.0 H1535 V150.0 H1536 V147.0 H1537 V150.0 H1538 V150.0 H1539 V137.0 H1540 V147.0 H1541 V150.0 H1542 V147.0 H1543 V150.0 H1544 V150.0 H1545 V150.0 H1546 V150.0 H1547 V150.0 H1548 V149.0 H1549 V150.0 H1550 V150.0 H1551 V151.0 H1552 V150.0 H1553 V145.0 H1554 V150.0 H1555 V144.0 H1556 V150.0 H1557 V150.0 H1558 V150.0 H1559 V150.0 H1560 V149.0 H1561 V150.0 H1562 V150.0 H1563 V148.0 H1564 V150.0 H1565 V147.0 H1566 V150.0 H1567 V150.0 H1568 V145.0 H1569 V149.0 H1570 V150.0 H1571 V146.0 H1572 V150.0 H1573 V150.0 H1574 V149.0 H1575 V146.0 H1576 V150.0 H1577 V153.0 H1578 V153.0 H1579 V149.0 H1580 V150.0 H1581 V145.0 H1582 V147.0 H1583 V146.0 H1584 V150.0 H1585 V150.0 H1586 V146.0 H1587 V150.0 H1588 V150.0 H1589 V150.0 H1590 V140.0 H1591 V149.0 H1592 V150.0 H1593 V148.0 H1594 V150.0 H1595 V150.0 H1596 V150.0 H1597 V144.0 H1598 V150.0 H1599 V144.0 H1600 V150.0 H1601 V145.0 H1602 V152.0 H1603 V150.0 H1604 V145.0 H1605 V149.0 H1606 V146.0 H1607 V150.0 H1608 V150.0 H1609 V145.0 H1610 V145.0 H1611 V148.0 H1612 V147.0 H1613 V150.0 H1614 V150.0 H1615 V146.0 H1616 V144.0 H1617 V150.0 H1618 V150.0 H1619 V147.0 H1620 V146.0 H1621 V152.0 H1622 V150.0 H1623 V145.0 H1624 V145.0 H1625 V149.0 H1626 V145.0 H1627 V150.0 H1628 V150.0 H1629 V150.0 H1630 V145.0 H1631 V150.0 H1632 V150.0 H1633 V150.0 H1634 V148.0 H1635 V150.0 H1636 V150.0 H1637 V149.0 H1638 V149.0 H1639 V150.0 H1640 V150.0 H1641 V149.0 H1642 V140.0 H1643 V149.0 H1644 V150.0 H1645 V143.0 H1646 V149.0 H1647 V146.0 H1648 V149.0 H1649 V150.0 H1650 V145.0 H1651 V150.0 H1652 V147.0 H1653 V150.0 H1654 V143.0 H1655 V128.0 H1656 V152.0 H1657 V149.0 H1658 V150.0 H1659 V148.0 H1660 V150.0 H1661 V153.0 H1662 V150.0 H1663 V146.0 H1664 V150.0 H1665 V151.0 H1666 V145.0 H1667 V147.0 H1668 V148.0 H1669 V150.0 H1670 V150.0 H1671 V148.0 H1672 V150.0 H1673 V147.0 H1674 V150.0 H1675 V145.0 H1676 V150.0 H1677 V147.0 H1678 V150.0 H1679 V144.0 H1680 V148.0 H1681 V145.0 H1682 V150.0 H1683 V149.0 H1684 V145.0 H1685 V150.0 H1686 V146.0 H1687 V153.0 H1688 V147.0 H1689 V150.0 H1690 V145.0 H1691 V150.0 H1692 V145.0 H1693 V150.0 H1694 V144.0 H1695 V150.0 H1696 V149.0 H1697 V147.0 H1698 V149.0 H1699 V150.0 H1700 V149.0 H1701 V150.0 H1702 V150.0 H1703 V150.0 H1704 V150.0 H1705 V150.0 H1706 V149.0 H1707 V150.0 H1708 V144.0 H1709 V150.0 H1710 V150.0 H1711 V150.0 H1712 V150.0 H1713 V149.0 H1714 V147.0 H1715 V149.0 H1716 V152.0 H1717 V150.0 H1718 V152.0 H1719 V146.0 H1720 V150.0 H1721 V150.0 H1722 V146.0 H1723 V149.0 H1724 V150.0 H1725 V146.0 H1726 V146.0 H1727 V150.0 H1728 V150.0 H1729 V150.0 H1730 V146.0 H1731 V150.0 H1732 V150.0 H1733 V147.0 H1734 V150.0 H1735 V149.0 H1736 V150.0 H1737 V153.0 H1738 V150.0 H1739 V146.0 H1740 V149.0 H1741 V145.0 H1742 V148.0 H1743 V150.0 H1744 V150.0 H1745 V149.0 H1746 V150.0 H1747 V145.0 H1748 V145.0 H1749 V148.0 H1750 V150.0 H1751 V150.0 H1752 V149.0 H1753 V150.0 H1754 V150.0 H1755 V150.0 H1756 V146.0 H1757 V150.0 H1758 V149.0 H1759 V150.0 H1760 V150.0 H1761 V150.0 H1762 V146.0 H1763 V149.0 H1764 V145.0 H1765 V150.0 H1766 V150.0 H1767 V150.0 H1768 V150.0 H1769 V152.0 H1770 V146.0 H1771 V147.0 H1772 V150.0 H1773 V147.0 H1774 V150.0 H1775 V150.0 H1776 V150.0 H1777 V145.0 H1778 V150.0 H1779 V147.0 H1780 V150.0 H1781 V146.0 H1782 V149.0 H1783 V149.0 H1784 V150.0 H1785 V149.0 H1786 V150.0 H1787 V150.0 H1788 V144.0 H1789 V150.0 H1790 V150.0 H1791 V152.0 H1792 V146.0 H1793 V147.0 H1794 V150.0 H1795 V153.0 H1796 V150.0 H1797 V149.0 H1798 V144.0 H1799 V150.0 H1800 V144.0 H1801 V146.0 H1802 V146.0 H1803 V150.0 H1804 V149.0 H1805 V146.0 H1806 V149.0 H1807 V150.0 H1808 V150.0 H1809 V148.0 H1810 V150.0 H1811 V150.0 H1812 V148.0 H1813 V146.0 H1814 V150.0 H1815 V147.0 H1816 V148.0 H1817 V150.0 H1818 V152.0 H1819 V152.0 H1820 V150.0 H1821 V150.0 H1822 V144.0 H1823 V149.0 H1824 V147.0 H1825 V149.0 H1826 V146.0 H1827 V150.0 H1828 V150.0 H1829 V145.0 H1830 V149.0 H1831 V147.0 H1832 V145.0 H1833 V145.0 H1834 V152.0 H1835 V146.0 H1836 V149.0 H1837 V145.0 H1838 V149.0 H1839 V150.0 H1840 V149.0 H1841 V145.0 H1842 V150.0 H1843 V150.0 H1844 V145.0 H1845 V146.0 H1846 V150.0 H1847 V144.0 H1848 V150.0 H1849 V150.0 H1850 V149.0 H1851 V150.0 H1852 V146.0 H1853 V149.0 H1854 V150.0 H1855 V149.0 H1856 V150.0 H1857 V148.0 H1858 V149.0 H1859 V148.0 H1860 V149.0 H1861 V150.0 H1862" stroke="#111" stroke-width="1.3" fill="none"/><path d="M29.5 21 V432.5 H1862" stroke="#5a5a5a" stroke-width="1" fill="none"/><path d="M66.5 432 V436" stroke="#111" stroke-width="1"/><path d="M117.5 432 V436" stroke="#111" stroke-width="1"/><path d="M168.5 432 V436" stroke="#111" stroke-width="1"/><path d="M219.5 432 V436" stroke="#111" stroke-width="1"/><path d="M270.5 432 V436" stroke="#111" stroke-width="1"/><path d="M321.5 432 V436" stroke="#111" stroke-width="1"/><path d="M372.5 432 V436" stroke="#111" stroke-width="1"/><path d="M422.5 432 V436" stroke="#111" stroke-width="1"/><path d="M473.5 432 V436" stroke="#111" stroke-width="1"/><path d="M524.5 432 V436" stroke="#111" stroke-width="1"/><path d="M575.5 432 V436" stroke="#111" stroke-width="1"/><path d="M626.5 432 V436" stroke="#111" stroke-width="1"/><path d="M677.5 432 V436" stroke="#111" stroke-width="1"/><path d="M728.5 432 V436" stroke="#111" stroke-width="1"/><path d="M779.5 432 V436" stroke="#111" stroke-width="1"/><path d="M830.5 432 V436" stroke="#111" stroke-width="1"/><path d="M881.5 432 V436" stroke="#111" stroke-width="1"/><path d="M932.5 432 V436" stroke="#111" stroke-width="1"/><path d="M983.5 432 V436" stroke="#111" stroke-width="1"/><path d="M1033.5 432 V436" stroke="#111" stroke-width="1"/><path d="M1084.5 432 V436" stroke="#111" stroke-width="1"/><path d="M1135.5 432 V436" stroke="#111" stroke-width="1"/><path d="M1186.5 432 V436" stroke="#111" stroke-width="1"/><path d="M1237.5 432 V436" stroke="#111" stroke-width="1"/><path d="M1288.5 432 V436" stroke="#111" stroke-width="1"/><path d="M1339.5 432 V436" stroke="#111" stroke-width="1"/><path d="M1390.5 432 V436" stroke="#111" stroke-width="1"/><path d="M1441.5 432 V436" stroke="#111" stroke-width="1"/><path d="M1492.5 432 V436" stroke="#111" stroke-width="1"/><path d="M1543.5 432 V436" stroke="#111" stroke-width="1"/><path d="M1594.5 432 V436" stroke="#111" stroke-width="1"/><path d="M1644.5 432 V436" stroke="#111" stroke-width="1"/><path d="M1695.5 432 V436" stroke="#111" stroke-width="1"/><path d="M1746.5 432 V436" stroke="#111" stroke-width="1"/><path d="M1797.5 432 V436" stroke="#111" stroke-width="1"/><path d="M1848.5 432 V436" stroke="#111" stroke-width="1"/></svg>
<div class="t r" style="left:25.0px;width:40px;top:911px;color:#334033;font-size:10.6px">22</div>
<div class="t" style="left:65.0px;top:911px;color:#334033;font-size:10.6px">:55</div>
<div class="t r" style="left:76.0px;width:40px;top:911px;color:#334033;font-size:10.6px">23</div>
<div class="t" style="left:116.0px;top:911px;color:#334033;font-size:10.6px">:00</div>
<div class="t r" style="left:127.0px;width:40px;top:911px;color:#334033;font-size:10.6px">23</div>
<div class="t" style="left:167.0px;top:911px;color:#334033;font-size:10.6px">:05</div>
<div class="t r" style="left:178.0px;width:40px;top:911px;color:#334033;font-size:10.6px">23</div>
<div class="t" style="left:218.0px;top:911px;color:#334033;font-size:10.6px">:10</div>
<div class="t r" style="left:229.0px;width:40px;top:911px;color:#334033;font-size:10.6px">23</div>
<div class="t" style="left:269.0px;top:911px;color:#334033;font-size:10.6px">:15</div>
<div class="t r" style="left:280.0px;width:40px;top:911px;color:#334033;font-size:10.6px">23</div>
<div class="t" style="left:320.0px;top:911px;color:#334033;font-size:10.6px">:20</div>
<div class="t r" style="left:331.0px;width:40px;top:911px;color:#334033;font-size:10.6px">23</div>
<div class="t" style="left:371.0px;top:911px;color:#334033;font-size:10.6px">:25</div>
<div class="t r" style="left:381.0px;width:40px;top:911px;color:#334033;font-size:10.6px">23</div>
<div class="t" style="left:421.0px;top:911px;color:#334033;font-size:10.6px">:30</div>
<div class="t r" style="left:432.0px;width:40px;top:911px;color:#334033;font-size:10.6px">23</div>
<div class="t" style="left:472.0px;top:911px;color:#334033;font-size:10.6px">:35</div>
<div class="t r" style="left:483.0px;width:40px;top:911px;color:#334033;font-size:10.6px">23</div>
<div class="t" style="left:523.0px;top:911px;color:#334033;font-size:10.6px">:40</div>
<div class="t r" style="left:534.0px;width:40px;top:911px;color:#334033;font-size:10.6px">23</div>
<div class="t" style="left:574.0px;top:911px;color:#334033;font-size:10.6px">:45</div>
<div class="t r" style="left:585.0px;width:40px;top:911px;color:#334033;font-size:10.6px">23</div>
<div class="t" style="left:625.0px;top:911px;color:#334033;font-size:10.6px">:50</div>
<div class="t r" style="left:636.0px;width:40px;top:911px;color:#334033;font-size:10.6px">23</div>
<div class="t" style="left:676.0px;top:911px;color:#334033;font-size:10.6px">:55</div>
<div class="t r" style="left:687.0px;width:40px;top:911px;color:#334033;font-size:10.6px">0</div>
<div class="t" style="left:727.0px;top:911px;color:#334033;font-size:10.6px">:00</div>
<div class="t r" style="left:738.0px;width:40px;top:911px;color:#334033;font-size:10.6px">0</div>
<div class="t" style="left:778.0px;top:911px;color:#334033;font-size:10.6px">:05</div>
<div class="t r" style="left:789.0px;width:40px;top:911px;color:#334033;font-size:10.6px">0</div>
<div class="t" style="left:829.0px;top:911px;color:#334033;font-size:10.6px">:10</div>
<div class="t r" style="left:840.0px;width:40px;top:911px;color:#334033;font-size:10.6px">0</div>
<div class="t" style="left:880.0px;top:911px;color:#334033;font-size:10.6px">:15</div>
<div class="t r" style="left:891.0px;width:40px;top:911px;color:#334033;font-size:10.6px">0</div>
<div class="t" style="left:931.0px;top:911px;color:#334033;font-size:10.6px">:20</div>
<div class="t r" style="left:942.0px;width:40px;top:911px;color:#334033;font-size:10.6px">0</div>
<div class="t" style="left:982.0px;top:911px;color:#334033;font-size:10.6px">:25</div>
<div class="t r" style="left:992.0px;width:40px;top:911px;color:#334033;font-size:10.6px">0</div>
<div class="t" style="left:1032.0px;top:911px;color:#334033;font-size:10.6px">:30</div>
<div class="t r" style="left:1043.0px;width:40px;top:911px;color:#334033;font-size:10.6px">0</div>
<div class="t" style="left:1083.0px;top:911px;color:#334033;font-size:10.6px">:35</div>
<div class="t r" style="left:1094.0px;width:40px;top:911px;color:#334033;font-size:10.6px">0</div>
<div class="t" style="left:1134.0px;top:911px;color:#334033;font-size:10.6px">:40</div>
<div class="t r" style="left:1145.0px;width:40px;top:911px;color:#334033;font-size:10.6px">0</div>
<div class="t" style="left:1185.0px;top:911px;color:#334033;font-size:10.6px">:45</div>
<div class="t r" style="left:1196.0px;width:40px;top:911px;color:#334033;font-size:10.6px">0</div>
<div class="t" style="left:1236.0px;top:911px;color:#334033;font-size:10.6px">:50</div>
<div class="t r" style="left:1247.0px;width:40px;top:911px;color:#334033;font-size:10.6px">0</div>
<div class="t" style="left:1287.0px;top:911px;color:#334033;font-size:10.6px">:55</div>
<div class="t r" style="left:1298.0px;width:40px;top:911px;color:#334033;font-size:10.6px">1</div>
<div class="t" style="left:1338.0px;top:911px;color:#334033;font-size:10.6px">:00</div>
<div class="t r" style="left:1349.0px;width:40px;top:911px;color:#334033;font-size:10.6px">1</div>
<div class="t" style="left:1389.0px;top:911px;color:#334033;font-size:10.6px">:05</div>
<div class="t r" style="left:1400.0px;width:40px;top:911px;color:#334033;font-size:10.6px">1</div>
<div class="t" style="left:1440.0px;top:911px;color:#334033;font-size:10.6px">:10</div>
<div class="t r" style="left:1451.0px;width:40px;top:911px;color:#334033;font-size:10.6px">1</div>
<div class="t" style="left:1491.0px;top:911px;color:#334033;font-size:10.6px">:15</div>
<div class="t r" style="left:1502.0px;width:40px;top:911px;color:#334033;font-size:10.6px">1</div>
<div class="t" style="left:1542.0px;top:911px;color:#334033;font-size:10.6px">:20</div>
<div class="t r" style="left:1553.0px;width:40px;top:911px;color:#334033;font-size:10.6px">1</div>
<div class="t" style="left:1593.0px;top:911px;color:#334033;font-size:10.6px">:25</div>
<div class="t r" style="left:1603.0px;width:40px;top:911px;color:#334033;font-size:10.6px">1</div>
<div class="t" style="left:1643.0px;top:911px;color:#334033;font-size:10.6px">:30</div>
<div class="t r" style="left:1654.0px;width:40px;top:911px;color:#334033;font-size:10.6px">1</div>
<div class="t" style="left:1694.0px;top:911px;color:#334033;font-size:10.6px">:35</div>
<div class="t r" style="left:1705.0px;width:40px;top:911px;color:#334033;font-size:10.6px">1</div>
<div class="t" style="left:1745.0px;top:911px;color:#334033;font-size:10.6px">:40</div>
<div class="t r" style="left:1756.0px;width:40px;top:911px;color:#334033;font-size:10.6px">1</div>
<div class="t" style="left:1796.0px;top:911px;color:#334033;font-size:10.6px">:45</div>
<div class="t r" style="left:1807.0px;width:40px;top:911px;color:#334033;font-size:10.6px">1</div>
<div class="t" style="left:1847.0px;top:911px;color:#334033;font-size:10.6px">:50</div>
<div class="t" style="left:30px;top:550px;color:#b5b5b5;font-size:10.5px">35 ms</div>
<div class="t" style="left:30px;top:601px;color:#b5b5b5;font-size:10.5px">30 ms</div>
<div class="t" style="left:30px;top:652px;color:#b5b5b5;font-size:10.5px">25 ms</div>
<div class="t" style="left:30px;top:704px;color:#b5b5b5;font-size:10.5px">20 ms</div>
<div class="t" style="left:30px;top:756px;color:#b5b5b5;font-size:10.5px">15 ms</div>
<div class="t" style="left:30px;top:807px;color:#b5b5b5;font-size:10.5px">10 ms</div>
<div class="t" style="left:30px;top:858px;color:#b5b5b5;font-size:10.5px">5 ms</div>
<div class="t r" style="left:0;width:27px;top:495px;color:#333;font-size:11px">40</div>
<div class="t r" style="left:0;width:27px;top:897px;color:#333;font-size:11px">0</div>
<div class="t" style="left:21px;top:708px;color:#444;font-size:10.5px;transform:translate(-50%,-50%) rotate(-90deg);line-height:12px">Latency (ms)</div>
<div class="t" style="left:1869px;top:716px;color:#b03040;font-size:10.5px;transform:translate(-50%,-50%) rotate(90deg);line-height:12px">Packet Loss %</div>
<div class="t" style="left:1864px;top:497px;color:#a02040;font-size:11px">1</div>
<div class="a" style="left:0;top:936px;width:1892px;height:26px;background:#f0f0f0"></div>
<div class="a" style="left:35px;top:949px;width:1810px;height:2px;background:#a3a3a3"></div>
<div class="a" style="left:1844px;top:941px;width:18px;height:18px;border-radius:50%;background:#f5f5f5;border:1.5px solid #d0d0d0"></div>
</body></html>
